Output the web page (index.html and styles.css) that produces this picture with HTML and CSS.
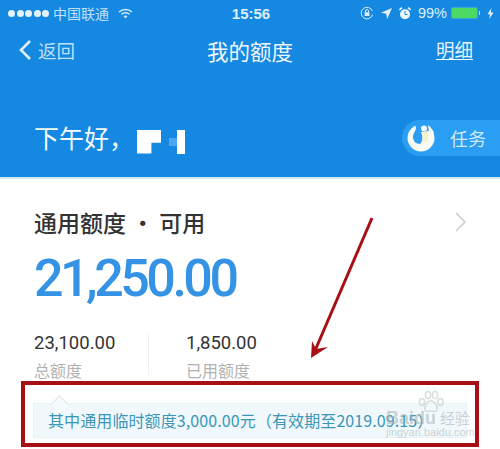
FILE: index.html
```html
<!DOCTYPE html>
<html lang="zh-CN">
<head>
  <meta charset="UTF-8">
  <title>我的额度</title>
  <meta name="viewport" content="width=device-width, initial-scale=1.0">
  <link rel="stylesheet" href="styles.css">
</head>
<body>
  <div class="screen">
    <header class="top">
      <div class="status">
        <div class="status-left">
          <span class="dots"><i></i><i></i><i></i><i></i><i></i></span>
          <span class="carrier">中国联通</span>
          <svg class="wifi" width="15" height="11" viewBox="0 0 15 11">
            <path d="M1 4 A9.5 9.5 0 0 1 14 4" fill="none" stroke="#d6ecfb" stroke-width="1.5"/>
            <path d="M3.4 6.3 A6 6 0 0 1 11.6 6.3" fill="none" stroke="#d6ecfb" stroke-width="1.5"/>
            <path d="M5.5 8.3 A3 3 0 0 1 9.5 8.3 L7.5 10.5 Z" fill="#d6ecfb"/>
          </svg>
        </div>
        <div class="time">15:56</div>
        <div class="status-right">
          <svg width="14" height="14" viewBox="0 0 14 14">
            <path d="M12.6 8.5 A5.8 5.8 0 1 1 12.4 5" fill="none" stroke="#d6ecfb" stroke-width="1"/>
            <rect x="4.6" y="6.2" width="4.8" height="3.8" fill="#d6ecfb"/>
            <path d="M5.5 6.2 V5 a1.5 1.5 0 0 1 3 0 V6.2" fill="none" stroke="#d6ecfb"/>
          </svg>
          <svg class="loc" width="11" height="11" viewBox="0 0 11 11">
            <path d="M11 0 L0 4.8 L5.2 5.8 L6.2 11 Z" fill="#e6f3fc"/>
          </svg>
          <svg class="alarm" width="12" height="13" viewBox="0 0 12 13">
            <circle cx="6" cy="7.2" r="5" fill="#eef7fd"/>
            <path d="M6 4 V7.5 H8.5" fill="none" stroke="#1588e2"/>
            <path d="M0.3 3 L3 0.7 M11.7 3 L9 0.7" stroke="#eef7fd" stroke-width="1.6"/>
          </svg>
          <span class="pct">99%</span>
          <span class="battery"><b></b></span>
          <svg width="7" height="11" viewBox="0 0 7 11">
            <path d="M4.5 0 L0.5 6.2 H3 L2.2 11 L6.5 4.5 H3.8 Z" fill="#e6f3fc"/>
          </svg>
        </div>
      </div>
      <nav class="nav">
        <div class="back">
          <svg width="14" height="22" viewBox="0 0 14 22">
            <path d="M12 2 L3 11 L12 20" fill="none" stroke="#dff0fc" stroke-width="2.6"/>
          </svg>
          <span>返回</span>
        </div>
        <div class="title">我的额度</div>
        <div class="detail">明细</div>
      </nav>
      <div class="hello">
        <div class="greet">
          <span>下午好，</span>
          <span class="mask">
            <span class="mask-a"></span>
            <span class="mask-b"></span>
            <span class="mask-c"></span>
          </span>
        </div>
        <div class="task">
          <svg width="28" height="28" viewBox="0 0 28 28">
            <circle cx="14" cy="14" r="13.5" fill="#f8fbf3"/>
            <path d="M8 0 L23 0 L22 7 L14 8 C16 12 16 17 13 20 C8 20 6 16 6 13 C6 9 9 7 9 4 Z" fill="#2a9ef2"/>
            <path d="M21 1 C24 3 26 6 27 9 L22 9 Z" fill="#f8fbf3"/>
            <circle cx="17" cy="4.5" r="3" fill="#f8fbf3"/>
            <path d="M14 8 L21 8 L21 16 L15 19 C16 15 16 12 14 8 Z" fill="#f6f0cc"/>
          </svg>
          <span>任务</span>
        </div>
      </div>
    </header>

    <main class="card">
      <div class="card-head">
        <h2>通用额度 · 可用</h2>
        <svg width="13" height="22" viewBox="0 0 13 22">
          <path d="M2 2 L11 11 L2 20" fill="none" stroke="#c9cccf" stroke-width="1.5"/>
        </svg>
      </div>
      <div class="amount">21,250.00</div>
      <div class="stats">
        <div class="stat stat-total">
          <div class="num">23,100.00</div>
          <div class="label">总额度</div>
        </div>
        <div class="stat stat-used">
          <div class="num">1,850.00</div>
          <div class="label">已用额度</div>
        </div>
      </div>
      <div class="tip">其中通用临时额度3,000.00元（有效期至2019.09.15）</div>
    </main>

    <!-- annotation drawn over the screenshot -->
    <div class="red-box"></div>
    <svg class="arrow" width="500" height="449" viewBox="0 0 500 449">
      <path d="M372 218 L314 353" fill="none" stroke="#a80f14" stroke-width="3"/>
      <path d="M311 358 L312 341 L316 349 L328 347 Z" fill="#a80f14"/>
    </svg>
    <div class="mark">
      <svg class="paw" width="26" height="24" viewBox="0 0 26 24">
        <g fill="none" stroke="#c8cfd2" stroke-width="1.5">
          <ellipse cx="4" cy="12" rx="2.6" ry="3.4"/>
          <ellipse cx="10" cy="5" rx="2.6" ry="3.6"/>
          <ellipse cx="17" cy="5" rx="2.6" ry="3.6"/>
          <ellipse cx="22.5" cy="12" rx="2.6" ry="3.4"/>
          <path d="M13 11 C9 11 6 16 7 20 C8 23 11 21 13 21 C15 21 18 23 19 20 C20 16 17 11 13 11 Z"/>
        </g>
      </svg>
      <div class="mark-row">
        <span class="mark-main">Baidu</span>
        <span class="mark-cn">经验</span>
      </div>
      <span class="mark-sub">jingyan.baidu.com</span>
    </div>
  </div>
</body>
</html>
```

FILE: styles.css
```css
* {
  box-sizing: border-box;
}
body {
  margin: 0;
  background: #fff;
  font-family: "Noto Sans CJK SC", "Liberation Sans", sans-serif;
}
.screen {
  position: relative;
  width: 500px;
  height: 449px;
  overflow: hidden;
}

/* blue header */
.top {
  height: 179px;
  background: #1588e2;
  border-bottom: 2px solid #cfeaf8;
  color: #e6f3fc;
}
.status {
  display: grid;
  grid-template-columns: 1fr auto 1fr;
  align-items: center;
  height: 26px;
  padding: 0 6px 0 8px;
}
.status-left,
.status-right {
  display: flex;
  align-items: center;
}
.status-right {
  justify-content: flex-end;
  gap: 7px;
}
.dots {
  display: flex;
  gap: 1.5px;
  margin-right: 4px;
}
.dots i {
  width: 7px;
  height: 7px;
  border-radius: 50%;
  background: #e6f3fc;
}
.carrier {
  font-size: 14px;
  color: #bfe0f8;
}
.wifi {
  margin-left: 9px;
}
.time,
.pct {
  font-family: "Liberation Sans", sans-serif;
  color: #dff0fc;
}
.time {
  font-size: 15px;
  font-weight: bold;
}
.pct {
  font-size: 14.5px;
  margin-right: -3px;
}
.battery {
  position: relative;
  display: block;
  width: 27px;
  height: 12px;
  padding: 1px;
  margin-right: 2px;
  border-radius: 2px;
  background: #3da6d0;
}
.battery::after {
  content: "";
  position: absolute;
  right: -2px;
  top: 4px;
  width: 1px;
  height: 4px;
  background: #bfe0f8;
}
.battery b {
  display: block;
  height: 100%;
  background: #4cd964;
  border-radius: 1px;
}
.nav {
  position: relative;
  display: flex;
  justify-content: space-between;
  align-items: center;
  height: 48px;
  padding: 0 27px 0 18px;
  font-size: 18.5px;
}
.back {
  display: flex;
  align-items: center;
  gap: 6px;
  color: #bfe0f8;
}
.title {
  position: absolute;
  left: 0;
  right: 0;
  text-align: center;
  font-size: 21.5px;
  color: #eef7fd;
}
.detail {
  line-height: 19px;
  border-bottom: 1px solid #eef7fd;
}
.hello {
  display: flex;
  justify-content: space-between;
  align-items: center;
  margin-top: 46px;
  height: 36px;
  padding-left: 34px;
}
.greet {
  display: flex;
  align-items: center;
  padding-bottom: 2px;
  font-size: 25px;
  color: #f4fafe;
}
.mask {
  position: relative;
  display: block;
  width: 49px;
  height: 24px;
  margin: 9px 0 0 3px;
}
.mask span {
  position: absolute;
  display: block;
}
.mask-a {
  left: 0;
  top: 0;
  width: 24px;
  height: 24px;
  background: #fff;
  clip-path: polygon(0 0, 100% 0, 100% 55%, 60% 55%, 60% 100%, 0 100%);
}
.mask-b {
  left: 32px;
  top: 8px;
  width: 8px;
  height: 8px;
  background: #4ba6ee;
}
.mask-c {
  left: 40px;
  top: 0;
  width: 8px;
  height: 24px;
  background: #fff;
}
.task {
  display: flex;
  align-items: center;
  gap: 15px;
  width: 98px;
  height: 36px;
  padding-left: 5px;
  border-radius: 18px 0 0 18px;
  background: #2a9ef2;
  font-size: 18px;
  color: #cfe9f5;
}

/* card */
.card {
  padding: 31px 0 0 34px;
}
.card-head {
  display: flex;
  justify-content: space-between;
  align-items: center;
  height: 24px;
  padding-right: 33px;
}
.card-head h2 {
  margin: 0;
  font-size: 23px;
  font-weight: 500;
  color: #333;
  line-height: 24px;
}
.amount {
  margin-top: 23px;
  font-family: Roboto, sans-serif;
  font-size: 52px;
  font-weight: 500;
  line-height: 44px;
  letter-spacing: -3.5px;
  color: #3593e6;
}
.stats {
  display: flex;
  margin-top: 32px;
}
.stat {
  height: 42px;
}
.stat-total {
  width: 115px;
  border-right: 1px solid #eef0f1;
}
.stat-used {
  padding-left: 37px;
}
.num {
  font-family: Roboto, sans-serif;
  font-size: 18.5px;
  line-height: 20px;
  color: #333;
}
.label {
  margin-top: 9px;
  font-size: 16px;
  line-height: 16px;
  color: #b2b2b2;
}
.tip {
  position: relative;
  width: 434px;
  height: 35px;
  margin: 28px 0 0 -1px;
  padding-left: 14px;
  background: #f1f8fb;
  border: 1px solid #e9f2f6;
  font-size: 16px;
  line-height: 33px;
  letter-spacing: 0.1px;
  color: #3a97b8;
  white-space: nowrap;
}
.tip::before {
  content: "";
  position: absolute;
  left: 19px;
  top: -6px;
  width: 12px;
  height: 12px;
  background: #f7fbfd;
  border-left: 1px solid #dfe6ea;
  border-top: 1px solid #dfe6ea;
  transform: rotate(45deg);
}

/* annotation */
.red-box {
  position: absolute;
  left: 21px;
  top: 381px;
  width: 458px;
  height: 66px;
  border: 4px solid #a80f14;
}
.arrow {
  position: absolute;
  left: 0;
  top: 0;
}
.mark {
  position: absolute;
  left: 386px;
  top: 390px;
  display: flex;
  flex-direction: column;
  width: 90px;
  color: rgba(165, 175, 180, 0.55);
  font-family: "Liberation Sans", "Noto Sans CJK SC", sans-serif;
}
.paw {
  margin: 0 0 -5px 32px;
  opacity: 0.7;
}
.mark-row {
  display: flex;
  align-items: center;
  gap: 4px;
  height: 18px;
}
.mark-main {
  font-size: 18px;
  font-weight: bold;
  line-height: 18px;
}
.mark-cn {
  font-family: "Noto Sans CJK SC", sans-serif;
  font-size: 15px;
  line-height: 18px;
}
.mark-sub {
  font-size: 11px;
  line-height: 10px;
  white-space: nowrap;
}
```
